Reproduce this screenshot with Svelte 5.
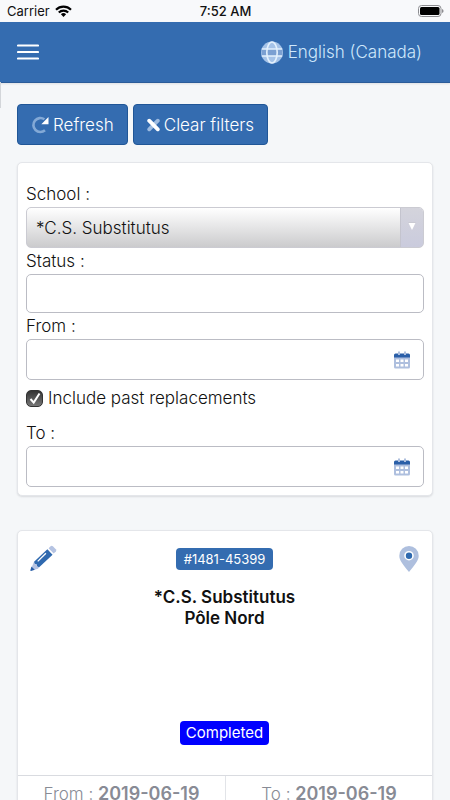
<script>
  let school = $state('*C.S. Substitutus');
  let status = $state('');
  let from = $state('');
  let to = $state('');
  let includePast = $state(true);

  function clearFilters() {
    status = '';
    from = '';
    to = '';
  }
</script>

{#snippet calendar()}
  <svg width="16" height="18" viewBox="0 0 16 18" aria-hidden="true">
    <path fill="#aebfde" d="M0 6h16v10a1.5 1.5 0 0 1-1.5 1.5h-13A1.5 1.5 0 0 1 0 16z" />
    <path fill="#2a5fa8" d="M1.5 2.5h13A1.5 1.5 0 0 1 16 4v2.500H0V4a1.5 1.5 0 0 1 1.5-1.5z" />
    <path fill="#aebfde" d="M4 .5h2V4H4zM10 .5h2V4h-2z" />
    <path fill="#fff" d="M2 8.500h3V11H2zM6.500 8.500h3V11h-3zM11 8.500h3V11h-3zM2 13h3v2.500H2zM6.500 13h3v2.500h-3zM11 13h3v2.500h-3z" />
  </svg>
{/snippet}

<div class="page">
  <div class="system">
    <div class="carrier">
      <span>Carrier</span>
      <svg width="17" height="12" viewBox="0 0 17 12" aria-hidden="true">
        <g fill="none" stroke="#000" stroke-width="2.200">
          <path d="M1 4.700a10.800 10.800 0 0 1 15 0" />
          <path d="M3.800 7.500a6.800 6.800 0 0 1 9.400 0" />
        </g>
        <path d="M8.500 12 5.900 9.300a3.800 3.800 0 0 1 5.200 0z" />
      </svg>
    </div>
    <time>7:52 AM</time>
    <div class="battery">
      <svg width="26" height="12" viewBox="0 0 26 12" aria-hidden="true">
        <rect x=".5" y=".5" width="22.500" height="11" rx="3" fill="none" stroke="#8d8d91" />
        <rect x="2" y="2" width="19.500" height="8" rx="1.500" />
        <path fill="#8d8d91" d="M24 4q1.600.5 1.600 2T24 8z" />
      </svg>
    </div>
  </div>

  <header>
    <button class="menu" aria-label="Menu">
      <svg width="22" height="16" viewBox="0 0 22 16" aria-hidden="true">
        <path d="M1 1.500h20M1 8h20M1 14.500h20" stroke="#fff" stroke-width="2.200" stroke-linecap="round" />
      </svg>
    </button>
    <a class="language" href="#language">
      <svg width="22" height="23" viewBox="0 0 22 23" aria-hidden="true">
        <circle cx="11" cy="11.500" r="11" fill="#a5c3e8" />
        <path fill="#7ba0d2" d="M.8 8h20.400v7H.8z" />
        <g fill="none" stroke="#e4f1fd">
          <ellipse cx="11" cy="11.500" rx="5.200" ry="10.500" stroke-width="1.600" />
          <path d="M.8 8h20.400M.8 15h20.400" stroke-width="1.300" />
        </g>
      </svg>
      <span>English (Canada)</span>
    </a>
    <span class="edge"></span>
  </header>

  <main>
    <div class="actions">
      <button class="action">
        <svg width="18" height="18" viewBox="0 0 18 18" aria-hidden="true">
          <path d="M13.400 3.300A7 7 0 1 0 14 14.300" fill="none" stroke="#83a9d6" stroke-width="2.600" />
          <path d="M17.500 1v7.200h-7.200z" fill="#fff" />
        </svg>
        <span>Refresh</span>
      </button>
      <button class="action" onclick={clearFilters}>
        <svg width="13" height="14" viewBox="0 0 13 14" aria-hidden="true">
          <path d="M10.800 2.700 2.200 11.300" stroke="#9dbbe0" stroke-width="3.800" stroke-linecap="round" />
          <path d="m2.200 2.700 8.600 8.600" stroke="#fff" stroke-width="3.800" stroke-linecap="round" />
        </svg>
        <span>Clear filters</span>
      </button>
    </div>

    <form class="card filters">
      <label for="school">School :</label>
      <div class="field picker">
        <select id="school" bind:value={school}>
          <option>*C.S. Substitutus</option>
        </select>
        <span class="arrow">
          <svg width="8" height="9" viewBox="0 0 8 9" aria-hidden="true">
            <path d="M.3 0.500h7.400L4 8z" fill="#fff" />
            <path d="M.3.500h7.400" stroke="#b4b4c0" stroke-width=".6" />
          </svg>
        </span>
      </div>
      <label for="status">Status :</label>
      <div class="field short">
        <input id="status" type="text" bind:value={status} />
      </div>
      <label for="from">From :</label>
      <div class="field">
        <input id="from" type="text" bind:value={from} />
        <button type="button" aria-label="Choose from date">{@render calendar()}</button>
      </div>
      <label class="past">
        <input type="checkbox" bind:checked={includePast} />
        <span class="tick">
          {#if includePast}
            <svg width="14" height="14" viewBox="0 0 14 14" aria-hidden="true">
              <path d="m2.500 8 3.200 3.600L11.500 2.500" fill="none" stroke="#fff" stroke-width="2" />
            </svg>
          {/if}
        </span>
        <span>Include past replacements</span>
      </label>
      <label for="to">To :</label>
      <div class="field">
        <input id="to" type="text" bind:value={to} />
        <button type="button" aria-label="Choose to date">{@render calendar()}</button>
      </div>
    </form>

    <article class="card">
      <div class="body">
        <div class="top">
          <button class="icon" aria-label="Edit">
            <svg width="27" height="27" viewBox="0 0 28 28" aria-hidden="true">
              <path fill="#b5c3e2" d="m19.300 3.300 2-2q1.200-1 2.400 0l3.100 3.200q1 1.200 0 2.300l-2.300 2z" />
              <path fill="#2f69af" d="m18 4.500 5.400 5.500L9.500 23l-2.200-.6-.4-2.200-2.200-.5-.5-2.400z" />
              <path fill="#b5c3e2" d="m4 17.500.7 2.200 2.200.5.4 2.200 2.200.6-1.200 1.700-3.600 1-2.900-2.500z" />
              <path fill="#2a5fa8" d="m1.500 22.300 3.500 3.300-3.900 1.300q-.8.200-.7-.7z" />
              <path d="m8 17 8.500-8.500" stroke="#fff" stroke-width="1.400" />
            </svg>
          </button>
          <span class="number">#1481-45399</span>
          <button class="icon" aria-label="Show on map">
            <svg width="20" height="26" viewBox="0 0 20 26" aria-hidden="true">
              <path fill="#aebfde" d="M10 0a9.700 9.700 0 0 1 9.700 9.700c0 4.500-3.200 8.200-9.700 16.300C3.500 17.900.3 14.200.3 9.700A9.700 9.700 0 0 1 10 0z" />
              <circle cx="10" cy="9.700" r="4" fill="#2f69af" stroke="#fff" stroke-width="1.600" />
            </svg>
          </button>
        </div>
        <h2>*C.S. Substitutus<br />Pôle Nord</h2>
        <span class="state">Completed</span>
      </div>
      <footer>
        <div>From : <strong>2019-06-19</strong></div>
        <div>To : <strong>2019-06-19</strong></div>
      </footer>
    </article>
  </main>
</div>

<style>
  :global(body) {
    margin: 0;
    background: #f5f7f9;
  }

  .page {
    min-height: 100vh;
    font: 300 17px/20px Inter, "Noto Sans", sans-serif;
    color: #111;
  }

  .page :global(*) {
    box-sizing: border-box;
  }

  button,
  input,
  select {
    margin: 0;
    padding: 0;
    border: 0;
    background: none;
    font: inherit;
    color: inherit;
  }

  svg {
    display: block;
    flex: none;
  }

  .system {
    display: grid;
    grid-template-columns: 1fr auto 1fr;
    align-items: center;
    height: 22px;
    padding: 0 6px 0 7px;
    background: #f8f9fb;
    font-size: 13px;
    font-weight: 400;
  }

  .system time {
    font-weight: 500;
  }

  .carrier {
    display: flex;
    align-items: center;
    gap: 5px;
  }

  .battery {
    justify-self: end;
  }

  header {
    position: relative;
    display: flex;
    align-items: center;
    justify-content: space-between;
    height: 61px;
    padding: 0 28px 0 17px;
    background: #346cb0;
    border-bottom: 1px solid #2b5c99;
    box-shadow: 0 1px 2px #14141f1a;
  }

  /* sliver of the closed side drawer, over the page below the bar */
  .edge {
    position: absolute;
    top: 100%;
    left: 0;
    width: 1px;
    height: 26px;
    background: #d3d6da;
  }

  .language {
    display: flex;
    align-items: center;
    gap: 5px;
    color: #cfe8fb;
    text-decoration: none;
  }

  main {
    padding: 21px 17px 0;
  }

  .actions {
    display: flex;
    gap: 5px;
    margin-bottom: 17px;
  }

  .action {
    display: flex;
    align-items: center;
    gap: 4px;
    height: 41px;
    padding: 0 13px;
    border: 1px solid #205697;
    border-radius: 4px;
    background: #346cb0;
    color: #fff;
  }

  .card {
    border: 1px solid #e4e6ea;
    border-radius: 5px;
    background: #fff;
    box-shadow: 0 1px 2px #14141f1f;
  }

  .filters {
    display: flex;
    flex-direction: column;
    gap: 3px;
    margin-bottom: 34px;
    padding: 21px 8px 8px;
  }

  .field {
    display: flex;
    height: 41px;
    border: 1px solid #bbbcc4;
    border-radius: 5px;
    background: #fff;
    overflow: hidden;
  }

  .short {
    height: 39px;
  }

  .field:focus-within {
    border-color: #346cb0;
  }

  .field input {
    flex: 1;
    min-width: 0;
    padding: 0 10px;
    outline: 0;
  }

  .field button {
    padding: 0 13px 0 10px;
  }

  .picker {
    background: linear-gradient(#fff, #cbcbcd);
    border-color: #cbcbd2;
  }

  .picker select {
    flex: 1;
    min-width: 0;
    padding: 0 9px;
    appearance: none;
    outline: 0;
  }

  .arrow {
    display: flex;
    justify-content: center;
    width: 23px;
    padding-top: 14px;
    border-left: 1px solid #c4c4ce;
    background: linear-gradient(#d4d4dc, #cacbdd);
    pointer-events: none;
  }

  .past {
    display: flex;
    align-items: center;
    gap: 5px;
    padding: 5px 0 12px;
  }

  .past input {
    position: absolute;
    opacity: 0;
  }

  .tick {
    display: flex;
    align-items: center;
    justify-content: center;
    width: 17px;
    height: 17px;
    border: 1px solid #333;
    border-radius: 5px;
    background: linear-gradient(#333, #777);
  }

  .body {
    display: flex;
    flex-direction: column;
    align-items: center;
    height: 244px;
    padding: 14px 13px 30px 12px;
  }

  .top {
    display: flex;
    align-items: center;
    justify-content: space-between;
    align-self: stretch;
  }

  .icon {
    display: flex;
    width: 28px;
  }

  .icon:last-child {
    justify-content: flex-end;
  }

  .number {
    padding: 1px 8px;
    border-radius: 4px;
    background: #346cb0;
    color: #fff;
    font-size: 13px;
    font-weight: 400;
  }

  h2 {
    margin: 15px 0 0;
    font-size: 17px;
    font-weight: 600;
    line-height: 21px;
    text-align: center;
  }

  .state {
    margin-top: auto;
    padding: 2px 6px;
    border-radius: 4px;
    background: #00f;
    color: #fff;
    font-size: 15px;
    font-weight: 400;
  }

  footer {
    display: grid;
    grid-template-columns: 1fr 1fr;
    border-top: 1px solid #d9dbe0;
    color: #888b95;
    text-align: center;
  }

  footer div {
    padding: 8px 0;
  }

  footer div + div {
    border-left: 1px solid #e2e4e8;
  }

  strong {
    font-size: 18px;
    font-weight: 600;
  }
</style>
